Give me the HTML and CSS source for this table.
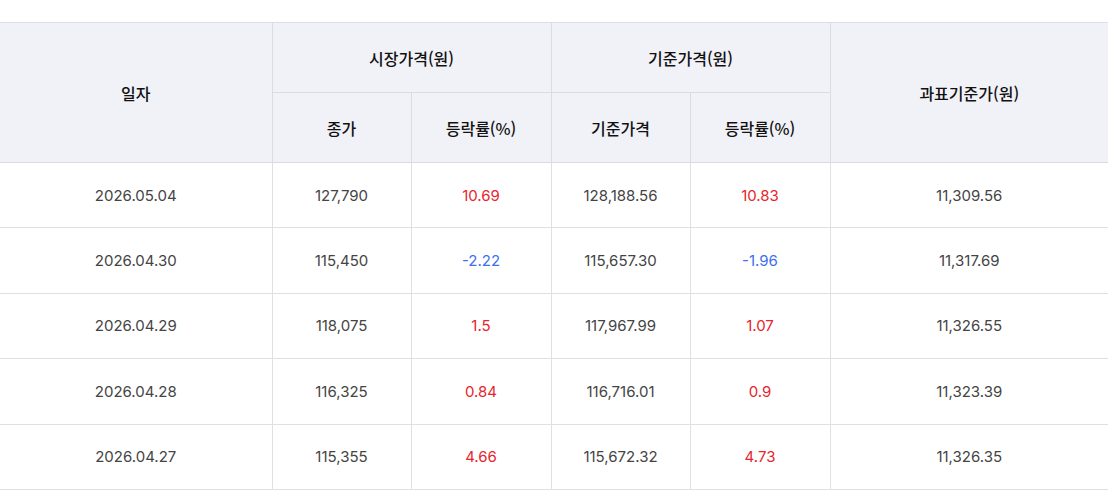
FILE: index.html
```html
<!DOCTYPE html>
<html lang="ko">
<head>
<meta charset="utf-8">
<link rel="stylesheet" href="styles.css">
</head>
<body>
<table class="tbl">
  <colgroup>
    <col class="w-date">
    <col class="w-a">
    <col class="w-b">
    <col class="w-a">
    <col class="w-b">
    <col class="w-last">
  </colgroup>
  <thead>
    <tr class="hrow">
      <th rowspan="2">일자</th>
      <th colspan="2">시장가격(원)</th>
      <th colspan="2">기준가격(원)</th>
      <th rowspan="2" class="c-last">과표기준가(원)</th>
    </tr>
    <tr class="hrow">
      <th>종가</th>
      <th>등락률(%)</th>
      <th>기준가격</th>
      <th>등락률(%)</th>
    </tr>
  </thead>
  <tbody>
    <tr><td>2026.05.04</td><td>127,790</td><td class="up">10.69</td><td>128,188.56</td><td class="up">10.83</td><td>11,309.56</td></tr>
    <tr><td>2026.04.30</td><td>115,450</td><td class="down">-2.22</td><td>115,657.30</td><td class="down">-1.96</td><td>11,317.69</td></tr>
    <tr><td>2026.04.29</td><td>118,075</td><td class="up">1.5</td><td>117,967.99</td><td class="up">1.07</td><td>11,326.55</td></tr>
    <tr><td>2026.04.28</td><td>116,325</td><td class="up">0.84</td><td>116,716.01</td><td class="up">0.9</td><td>11,323.39</td></tr>
    <tr><td>2026.04.27</td><td>115,355</td><td class="up">4.66</td><td>115,672.32</td><td class="up">4.73</td><td>11,326.35</td></tr>
  </tbody>
</table>
</body>
</html>
```
FILE: styles.css
```css
html, body {
  margin: 0;
  padding: 0;
  background: #ffffff;
}
body {
  padding-top: 22px;
  font-family: "Noto Sans CJK KR", "Noto Sans", sans-serif;
}
.tbl {
  width: 1108px;
  border-collapse: collapse;
  table-layout: fixed;
  border-top: 1px solid #dcdde6;
}
.w-date { width: 272px; }
.w-a { width: 139px; }
.w-b { width: 140px; }
.w-last { width: 278px; }
.tbl th {
  background: #f1f2f8;
  color: #111111;
  font-weight: 500;
  font-size: 16px;
  height: 69px;
  padding: 0;
  text-align: center;
  vertical-align: middle;
  border: 1px solid #d9dbe5;
  border-top: none;
}
.tbl th:first-child { border-left: none; }
.tbl th.c-last { border-right: none; }
.tbl td {
  height: 64.4px;
  padding: 0;
  text-align: center;
  vertical-align: middle;
  font-family: "Inter", "Noto Sans CJK KR", sans-serif;
  font-size: 15px;
  color: #444444;
  border: 1px solid #e0e0e2;
}
.tbl td:first-child { border-left: none; }
.tbl td:last-child { border-right: none; }
.tbl tbody tr:first-child td { border-top: 1px solid #d3d5df; }
.tbl td.up { color: #e8242c; }
.tbl td.down { color: #3d6ff0; }
```
